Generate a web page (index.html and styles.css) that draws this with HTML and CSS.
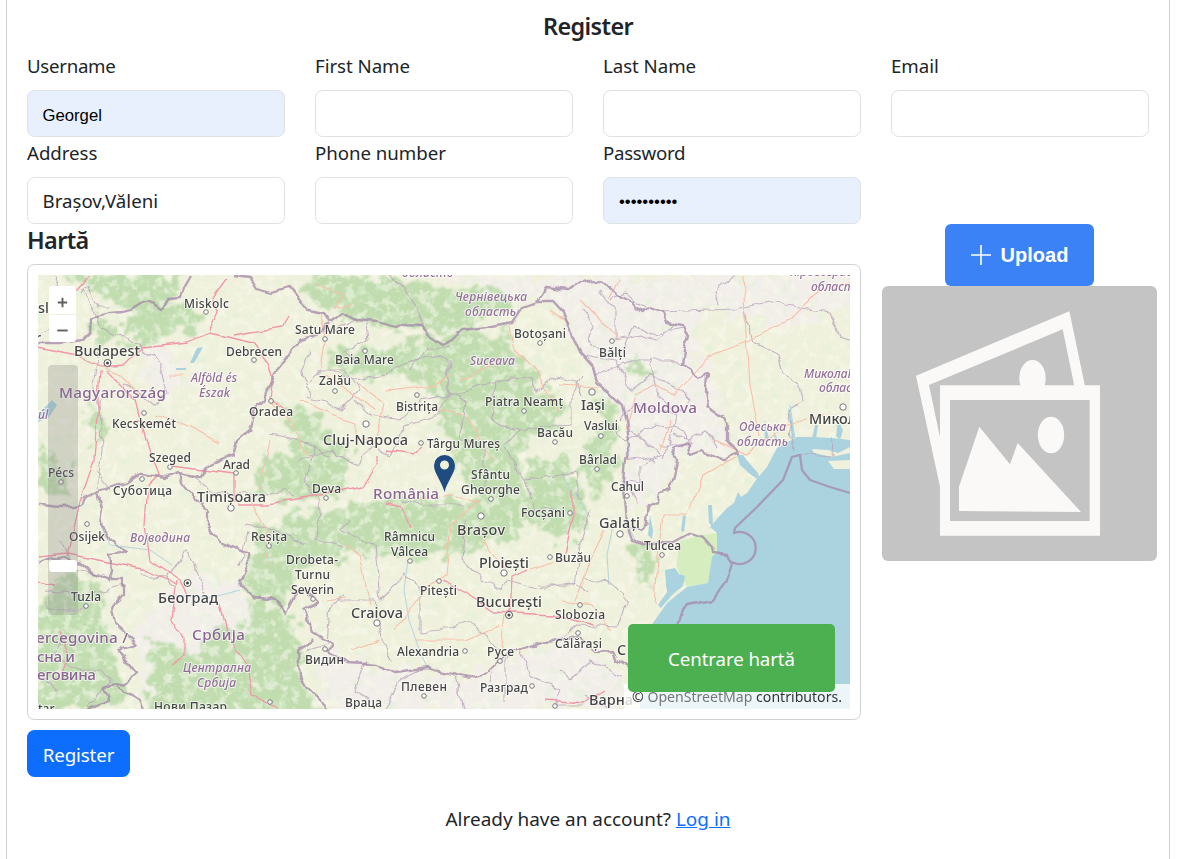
FILE: index.html
```html
<!DOCTYPE html>
<html lang="ro">
<head>
<meta charset="utf-8">
<title>Register</title>
<link rel="stylesheet" href="styles.css">
</head>
<body>
<main class="card">
  <h5 class="title">Register</h5>
  <form class="form">
    <div class="fields">
      <label class="field"><span class="tight">Username</span><input class="input filled" value="Georgel"></label>
      <label class="field"><span>First Name</span><input class="input"></label>
      <label class="field"><span>Last Name</span><input class="input"></label>
      <label class="field"><span>Email</span><input class="input"></label>
      <label class="field"><span>Address</span><input class="input" value="Brașov,Văleni"></label>
      <label class="field"><span>Phone number</span><input class="input"></label>
      <label class="field"><span class="tight">Password</span><input class="input filled secret" value="••••••••••"></label>
    </div>
    <div class="media">
      <section class="map-col">
        <h5 class="map-title">Hartă</h5>
        <div class="map-box">
          <div class="map">
            <svg class="map-art" viewBox="38 275 812 434">
              <defs>
                <filter id="rough" x="-5%" y="-5%" width="110%" height="110%"><feTurbulence type="fractalNoise" baseFrequency=".07" numOctaves="4" seed="4"/><feDisplacementMap in="SourceGraphic" scale="34" xChannelSelector="R" yChannelSelector="G"/><feGaussianBlur stdDeviation="1.1"/></filter>
                <filter id="jag" x="-5%" y="-5%" width="110%" height="110%"><feTurbulence type="fractalNoise" baseFrequency=".1" numOctaves="1" seed="8"/><feDisplacementMap in="SourceGraphic" scale="9" xChannelSelector="R" yChannelSelector="G"/></filter>
                <filter id="bend" x="-5%" y="-5%" width="110%" height="110%"><feTurbulence type="fractalNoise" baseFrequency=".05" numOctaves="1" seed="12"/><feDisplacementMap in="SourceGraphic" scale="8" xChannelSelector="R" yChannelSelector="G"/><feGaussianBlur stdDeviation=".25"/></filter>
                <filter id="speckle" x="0" y="0" width="100%" height="100%"><feTurbulence type="fractalNoise" baseFrequency=".09" numOctaves="4" seed="21"/><feColorMatrix values="0 0 0 0 .74  0 0 0 0 .87  0 0 0 0 .67  5 0 0 0 -2.8"/><feGaussianBlur stdDeviation=".7"/></filter>
                <filter id="valleys" x="0" y="0" width="100%" height="100%"><feTurbulence type="fractalNoise" baseFrequency=".11" numOctaves="3" seed="33"/><feColorMatrix values="0 0 0 0 .94  0 0 0 0 .95  0 0 0 0 .84  0 6 0 0 -3.1"/><feGaussianBlur stdDeviation=".7"/></filter>
              </defs>
              <rect class="land" x="38" y="275" width="812" height="434"/>
              <g class="urban" filter="url(#rough)">
                <path d="M300 275H860V300L780 330 710 310 690 330 710 375 735 450 675 455 660 500 625 500 628 425 595 380 560 305 520 300 440 275zM145 345l30 10 10 30-20 15-25-30zM130 625l60-50 50 10 15 40 20 84H150z"/>
                <path d="M315 650l60 15 80 12 60-15 60-25 50 40V709H330z"/>
              </g>
              <g class="forest" filter="url(#rough)">
                <path d="M60 275H185L170 300 120 308 95 290zM140 300l40 0 25 20-60 28-30-10zM95 315l20 10-10 25-15-10z"/>
                <path d="M310 275l100 0 50 20 30-10 25 18-35 18 0 10-60 0-70-12-45-22z"/>
                <path d="M455 335l50-5 15 25 25 35 0 45-25 10 0 40 60 30 10 15-30 5-10-15-60 5-20-35-20-40-15-50-15-20-45 0-20-15 40-20z"/>
                <path d="M500 400h60v35h-40zM600 390l15 20 0 60-20 30-15-40 20-30zM530 460h35l25 60-25 25-40-25z"/>
                <path d="M285 400l40 15 5 70-40 20-35-20 5-25 35-10zM305 440l50 10-10 40-45 10z"/>
                <path d="M290 515l50-5 60-12 85 5 25-20 20 30-20 30-30 0-30 10-50 5-40-6-60 15-20 40-25-8-5-50z"/>
                <path d="M255 525l50 5-5 40-20 25-35-10z"/>
                <path d="M60 570l40 10 5 30 5 35 15 30-10 34H38V620zM150 640l50 10 15-25 50 5 45 60 10 29H150z"/>
                <path d="M245 600l50 15 10 45-10 10-45-20z"/>
                <path d="M455 440l30 15-10 20-35-10zM330 345l60 15-20 15-40-5z"/>
                <path d="M625 360l35 12-20 4-20-6zM630 550l25-10 0 40-15 5z"/>
                <path d="M85 400l30 25-20 20zM38 440l30 30 0 20-30 0z"/>
              </g>
              <rect x="38" y="275" width="812" height="434" filter="url(#speckle)" opacity=".5"/>
              <rect x="38" y="275" width="812" height="434" filter="url(#valleys)" opacity=".5"/>
              <path class="delta" d="M680 541L703 535 717 533 717 553 708 583 687 587 676 566z"/>
              <g class="water">
                <path d="M850 440L832 438 813 437 797 437 777 448 767 467 756 480 747 493 741 497 738 492 734 503 727 508 710 527 717 533 717 553 712 557 708 583 687 587 667 603 653 623 642 640 640 709H850z"/>
                <path d="M737 455l6 0 6 8 9 10 2 8-10-7-10-9zM665 570l10-2 4 6 6 2-2 10-10 8-12 14-3-3 9-13-1-7zM708 505l4 0 1 22-4-4zM683 515l3 1-2 16-3-1zM650 515l3 15-1 9-4-4zM764 420l5 18-4 3zM773 430l5 10-3 0zM788 408l2 2 5 28-3 0zM815 425l3 0-2 14-4 0zM838 420l5 10-3 10-4-4zM40 412l12-12 5 5-8 12-11 5zM197 348l6-1-9 16-4 0zM176 368h10v2h-10z"/>
              </g>
              <path class="land" d="M812 449l16 1 10 3 12-6v6l-18 4-18-4zM828 461l22-1 0 9-16 0z"/>
              <g class="river"><path d="M408 560l-4 30 5 30 12 35 8 15M563 315l9 20M575 492l15 25M614 520l-7 35 2 30M100 523l10 22 40 5 22 15M240 590l-30 8-35-3M573 495l-10-20M625 520l10 20M790 405l5 35"/></g>
              <g class="county" filter="url(#jag)">
                <path d="M58 275l-4 25 6 25-20 8M80 292l8-5 10 20 12 0M83 290l20 40 20 6 35 24 10 35-15 10-28-22M100 345l-6 35 4 30M100 400l2 50-5 38M95 470l15 20"/>
                <path d="M310 338l55-20 3 22-25 12 20 12M330 370l25 10 30-5 20-12 28-8 15 5 0 38-15 20-28 8-15 30-18-10-15 20-25-15-35 10M310 385l10-15 25 0 15 20-20 20-15-8-20-5M315 445l-10 40 15 15-3 40 25 8M355 400l15 15 30 5 20-20 30-5 15 5-5 40 25 2 0 45M390 275l20 20 15 35M410 370l15-20 25-5"/>
                <path d="M450 360l-3 35 15 0 15-10 25-5 30-3 5 15 15-15 25 5 5 15M495 380l-3 40 20 10 60-5 0-30 10-20M520 430l-15 15 15 30 5 5 35-5 15-5 5 30M525 480l10 30 20-2"/>
                <path d="M350 520l-10 10 35 15 5 55 25-25 15 12 0 45 20-2 30-8 30 30-10 30M400 500l25 5 40 0M465 520l-3 40 20 20 20 10 5-10 30 8 40-5 10 10M540 585l35 0 5-40 10-35M345 595l-15 10-3 40-20 5M335 600l40 0 5 30 10 30"/>
                <path d="M510 650l-5 10 0 40M365 660l-10 30 15 10M420 670l-20 10-15 29M455 675l8 34M520 650l10 25 30 15-5 15 30 0M560 670l10 10 20-20 30 15M585 695l25 14M557 640l20-15 40 2 10-25-15-20-30-2"/>
                <path d="M583 310l10 15-5 15 20 15 15-5 10-25 20 10 30-8M600 290l15 20 0 30 25-5 15 5 20-15M585 355l30 5 15 30 20-15 30 15 10 10-15 15-40-10-15 15M595 375l40-15 35 0 15 5M610 425l15 15 30-15 30 5 5 15-30 0M620 480l20 3 0-18 25-10M630 430l30 25M650 355l8 40 20 20-15 45M638 505l-10-20M675 435l15 5 15-10 12 18"/>
                <path d="M610 300l15-7 20 15M660 312l75-3 40-8 10 5 45 6 10 25 10 3M718 305l-3-15 15-10 5-5M745 312l8 30 25 12 5 20 15 8 5 20-15 10 5 40M797 454l35 3 1-20M625 460l20-3 10 5"/>
                <path d="M310 350l-8 20 10 30M270 435l40 8 20 15M195 477l15 15 60 3 15-5 10 5M245 525l30 5 30 15M248 530l-8 35M140 576l25 2 12 10M165 577l15-15 5-12 15 25 5 20M60 540l15 30 30 5M45 590l40 5 40-10M60 640l-8 20 30 10 20 0 10 12-25 25M45 600l5 10 35 0M38 670l20 20"/>
              </g>
              <g class="road" filter="url(#bend)">
                <path d="M38 348l40 8 22 10 25-2 17-17 45-5 22-9 45 10 15 20 4 15-3 20 17 12M209 331l8-18-5-15 15-20M90 275l-30 35M233 335l50-8 7-12M100 370l-2 30-4 60-10 30-7 20-10 47M105 370l30 30 10 40 13 35-10 10-3 40 5 35 30 20 8 15M38 557l30-3 50 10 30 6 30 15M38 583l18 3M60 630l10 25-8 20M177 580l-5 40 12 18 0 18-12 8M220 605l8 30 20 30 5 30 25 14M237 504l30 0 60-10 35-8 15-22 0-8M388 450l25 4 10-8M170 465l65 8 0 30M385 505l18 3 8 20M443 580l30 18 20 14 60 3 40 10M563 560l10-40 0-30M510 615l2-38 15-7M545 700l40 3 20-12M135 420l20 5"/>
              </g>
              <g class="minor" filter="url(#bend)">
                <path d="M315 285l30 10-12 12 20-3M320 313l5 20-5 35M300 400l30 15 25 8 0 15 20 5 8-40-25-20M385 390l50-5 15-10M440 410l25 5 15 25 15 20M270 400l20 20 20 40M325 375l50 35M510 325l5 25 20 20 25 40M560 385l40 2M500 360l-40 20M580 300l20 20 20 20M625 430l10-35 20-10 20 10 35-40 40-15 40-20 30-30 50-10M743 275l3 60 3 50 10 50M660 450l10-30M715 440l30 15 40-30 40-10M738 455l-35 20-15 40-25 0-5 40-3 50M327 600l20-3M380 640l-30 10M395 630l30-40 20-15 5-50 30-25M345 545l15 10 10 50M415 640l50 0 35-15M500 655l5-40M562 600l30 5 20 25M575 600l15-40 15-30M530 570l35-10M480 530l10 20 15 20M420 500l30-5 30 8M550 310l20 15M610 300l10-20M270 440l-10 50M250 500l15 30 5 40M170 375l15 0M100 365l20 10 20 20 15 0M155 415l30 10 35 18"/>
              </g>
              <g class="nation">
                <path filter="url(#bend)" d="M38 343L60 343 83 340 91 332 92 317 108 313 123 312 132 310 143 303 150 301 160 308 170 298 180 297 183 287 190 275M233 275L250 277 257 288 273 292 290 287 298 298 307 310 323 313 330 322 336 318 343 312 357 320 377 322 397 327 404 324 420 325 430 337 443 345 453 340 463 330 487 327 513 322 523 307 537 302 553 302 563 313 570 330 580 353 593 368 597 382 610 393 622 405 627 427 630 447 625 460 623 480 625 500 627 523 633 540 643 543 673 542 690 533 703 537 712 547 713 553 727 555 732 562 725 583 713 600 687 605 682 612 678 626"/>
                <path d="M732 562A16 16 0 1 0 734 533L735 528 757 507 783 480 792 457 800 455 802 470 810 480 830 487 850 493"/>
                <path d="M537 302L547 287 567 290 573 285 593 280 607 285 617 295 633 302 642 312 650 307 663 312 667 322 683 325 688 337 684 350 682 363 693 370 697 378 707 375 706 390 708 407 720 415 728 423 728 440 738 453 725 458 713 457 703 450 690 455 687 443 672 448 677 461 675 473 670 489 660 493 658 502 647 510 646 522 643 530 630 527" filter="url(#jag)"/>
                <path filter="url(#jag)" d="M330 322L320 333 300 340 287 357 277 370 274 380 267 390 264 400 257 407 250 430 237 440 233 455 222 459 207 467 200 477 177 473 167 477 140 473 127 483 100 490 83 498 80 505 63 507 38 505"/>
                <path filter="url(#jag)" d="M177 473L187 490 200 503 207 510 207 527 220 542 247 553 248 565 240 580 242 587 253 597 277 600 285 612 293 597 305 588 317 603 303 610 313 633 333 645 327 652 347 662 367 663 397 673 427 668 447 673 470 678 487 673 507 653 533 645 557 640 580 637 597 653 613 652 617 660 630 668"/>
                <path filter="url(#jag)" d="M313 640L298 650 300 677 307 687 320 700 325 709M98 490L102 510 100 523 110 540 128 551 110 555 112 570 110 578 123 578 123 593 112 610 115 623 138 645 118 650 135 673 127 683 103 688 109 700 87 709M118 687L140 700 143 709M38 563L53 557 80 562 93 573 110 580"/>
              </g>
              <g class="dots">
                <circle cx="206" cy="312" r="2.3"/><circle cx="254" cy="360" r="2.3"/><circle cx="271" cy="401" r="2.3"/><circle cx="144" cy="413" r="2.3"/><circle cx="170" cy="467" r="2.3"/><circle cx="236" cy="473" r="2.3"/><circle cx="142" cy="479" r="2.3"/><circle cx="61" cy="482" r="2.3"/><circle cx="325" cy="339" r="2.3"/><circle cx="365" cy="351" r="2.3"/><circle cx="335" cy="391" r="2.3"/><circle cx="417" cy="395" r="2.3"/><circle cx="366" cy="424" r="3.2"/><circle cx="421" cy="443" r="2.3"/><circle cx="540" cy="343" r="2.3"/><circle cx="524" cy="411" r="2.3"/><circle cx="555" cy="442" r="2.3"/><circle cx="612" cy="341" r="2.3"/><circle cx="592" cy="392" r="3.2"/><circle cx="601" cy="436" r="2.3"/><circle cx="597" cy="469" r="2.3"/><circle cx="627" cy="496" r="2.3"/><circle cx="843" cy="407" r="3.2"/><circle cx="87" cy="524" r="2.3"/><circle cx="231" cy="508" r="3.2"/><circle cx="269" cy="546" r="2.3"/><circle cx="86" cy="606" r="2.3"/><circle cx="326" cy="498" r="2.3"/><circle cx="481" cy="516" r="3.2"/><circle cx="491" cy="499" r="2.3"/><circle cx="570" cy="513" r="2.3"/><circle cx="410" cy="561" r="2.3"/><circle cx="439" cy="581" r="2.3"/><circle cx="504" cy="573" r="3.2"/><circle cx="550" cy="557" r="2.3"/><circle cx="313" cy="599" r="2.3"/><circle cx="377" cy="623" r="3.2"/><circle cx="465" cy="651" r="2.3"/><circle cx="500" cy="661" r="2.3"/><circle cx="325" cy="649" r="2.3"/><circle cx="424" cy="696" r="2.3"/><circle cx="532" cy="686" r="2.3"/><circle cx="555" cy="706" r="2.3"/><circle cx="580" cy="605" r="2.3"/><circle cx="578" cy="633" r="2.3"/><circle cx="620" cy="534" r="3.2"/><circle cx="662" cy="555" r="2.3"/><circle cx="270" cy="702" r="2.3"/>
                <circle class="capital" cx="107.500" cy="363" r="3.5"/><circle class="capital" cx="187.500" cy="583" r="3.5"/><circle class="capital" cx="509" cy="615" r="3.5"/>
              </g>
              <g class="core"><circle cx="107.500" cy="363" r="1.500"/><circle cx="187.500" cy="583" r="1.500"/><circle cx="509" cy="615" r="1.500"/></g>
              <g class="town">
                <text x="184" y="308" textLength="45">Miskolc</text><text x="226" y="356" textLength="56">Debrecen</text><text x="249" y="416" textLength="44">Oradea</text><text x="112" y="428" textLength="64">Kecskemét</text><text x="149" y="462" textLength="42">Szeged</text><text x="223" y="469" textLength="27">Arad</text><text x="113" y="495" textLength="59">Суботица</text><text x="48" y="477" textLength="26">Pécs</text><text x="295" y="334" textLength="60">Satu Mare</text><text x="335" y="364" textLength="59">Baia Mare</text><text x="319" y="385" textLength="32">Zalău</text><text x="396" y="411" textLength="42">Bistrița</text><text x="427" y="448" textLength="73">Târgu Mureș</text><text x="514" y="338" textLength="52">Botoșani</text><text x="485" y="406" textLength="78">Piatra Neamț</text><text x="537" y="437" textLength="36">Bacău</text><text x="599" y="357" textLength="27">Bălți</text><text x="584" y="430" textLength="34">Vaslui</text><text x="579" y="464" textLength="38">Bârlad</text><text x="611" y="491" textLength="33">Cahul</text><text x="312" y="493" textLength="29">Deva</text><text x="471" y="479" textLength="39">Sfântu</text><text x="461" y="494" textLength="59">Gheorghe</text><text x="69" y="541" textLength="36">Osijek</text><text x="251" y="541" textLength="36">Reșița</text><text x="71" y="601" textLength="30">Tuzla</text><text x="384" y="541" textLength="51">Râmnicu</text><text x="391" y="556" textLength="37">Vâlcea</text><text x="286" y="564" textLength="52">Drobeta-</text><text x="295" y="579" textLength="35">Turnu</text><text x="291" y="594" textLength="43">Severin</text><text x="420" y="595" textLength="37">Pitești</text><text x="521" y="517" textLength="44">Focșani</text><text x="555" y="562" textLength="36">Buzău</text><text x="555" y="619" textLength="50">Slobozia</text><text x="555" y="648" textLength="47">Călărași</text><text x="397" y="656" textLength="62">Alexandria</text><text x="487" y="656" textLength="27">Русе</text><text x="305" y="664" textLength="39">Видин</text><text x="401" y="691" textLength="46">Плевен</text><text x="480" y="692" textLength="48">Разград</text><text x="345" y="707" textLength="37">Враца</text><text x="154" y="711" textLength="73">Нови Пазар</text><text x="644" y="550" textLength="37">Tulcea</text><text x="38" y="713">tar</text>
              </g>
              <g class="city">
                <text x="74" y="356" textLength="66">Budapest</text><text x="323" y="445" textLength="85">Cluj-Napoca</text><text x="581" y="410" textLength="24">Iași</text><text x="809" y="424">Микол</text><text x="197" y="502" textLength="69">Timișoara</text><text x="158" y="603" textLength="60">Београд</text><text x="457" y="535" textLength="48">Brașov</text><text x="479" y="568" textLength="50">Ploiești</text><text x="476" y="607" textLength="66">București</text><text x="351" y="618" textLength="52">Craiova</text><text x="599" y="528" textLength="41">Galați</text><text x="617" y="655">C</text><text x="589" y="705" textLength="44">Варна</text><text x="38" y="313">slava</text><text x="35" y="343">r</text>
              </g>
              <g class="country">
                <text x="59" y="398" textLength="107">Magyarország</text><text x="373" y="499" textLength="66">România</text><text x="633" y="413" textLength="64">Moldova</text><text x="192" y="640" textLength="53">Србија</text><text x="36" y="643" textLength="92">ercegovina /</text><text x="37" y="662" textLength="38">сна и</text><text x="37" y="680" textLength="59">еговина</text>
              </g>
              <g class="region">
                <text x="191" y="382" textLength="46">Alföld és</text><text x="199" y="397" textLength="31">Észak</text><text x="455" y="301" textLength="72">Чернівецька</text><text x="465" y="316" textLength="51">область</text><text x="402" y="277" textLength="51">область</text><text x="470" y="365" textLength="45">Suceava</text><text x="130" y="542" textLength="60">Војводина</text><text x="183" y="672" textLength="68">Централна</text><text x="197" y="687" textLength="39">Србија</text><text x="739" y="431" textLength="47">Одеська</text><text x="737" y="446" textLength="51">область</text><text x="804" y="378">Миколаї</text><text x="819" y="392">област</text><text x="790" y="276">Кіровоград</text><text x="811" y="291">област</text><text x="38" y="419">úl</text>
              </g>
              <path class="pin" fill-rule="evenodd" d="M444.500 492C442 482 434 473 434 465.500A10.500 10.500 0 0 1 455 465.500C455 473 447 482 444.500 492zM444.500 460.500A4.500 4.500 0 1 0 444.500 469.500A4.500 4.500 0 1 0 444.500 460.500z"/>
            </svg>
            <div class="zoom">
              <button type="button" class="zoom-btn top"><svg viewBox="0 0 11 11"><path d="M5.500 .8v9.400M.8 5.500h9.400"/></svg></button>
              <button type="button" class="zoom-btn bottom"><svg viewBox="0 0 11 11"><path d="M.3 5.500h10.400"/></svg></button>
            </div>
            <div class="slider"><div class="thumb"></div></div>
            <div class="credit">© <a>OpenStreetMap</a> <span>contributors.</span></div>
            <button type="button" class="center-btn">Centrare hartă</button>
          </div>
        </div>
      </section>
      <aside class="upload-col">
        <button type="button" class="upload"><svg viewBox="0 0 20 20"><path d="M10 0v20M0 10h20"/></svg><span>Upload</span></button>
        <svg class="preview" viewBox="0 0 825 825">
          <rect width="825" height="825" fill="#c4c4c4"/>
          <g fill="#faf9f8">
            <path fill-rule="evenodd" d="M102 269L562 76 609 300H577L542 130 141 297 174 454V602z"/>
            <ellipse cx="451.500" cy="276" rx="39.500" ry="54"/>
            <path fill-rule="evenodd" d="M174 298H654V749H174zM204 342V705H623V342z"/>
            <ellipse cx="507" cy="447" rx="39.500" ry="55"/>
            <path d="M231 602L292 422 384 535 407 471 597 678 231 675z"/>
          </g>
        </svg>
      </aside>
    </div>
    <button type="button" class="submit">Register</button>
  </form>
  <p class="login">Already have an account? <a href="#">Log in</a></p>
</main>
</body>
</html>
```
FILE: styles.css
```css
* { box-sizing: border-box; }
html, body { height: 100%; }
body { margin: 0; overflow: hidden; background: #fff; color: #212529; font: 18.7px/30px "Noto Sans", sans-serif; }
button, input { font: inherit; margin: 0; }
.card { height: 859px; margin: 0 8px 0 6px; padding: 10px 12px 0 20px; border: solid #cfd0d1; border-width: 0 1px; }
.title, .map-title { margin: 0; height: 40px; font-size: 23.4px; font-weight: 600; line-height: 32px; letter-spacing: -.6px; }
.title { padding-right: 8px; text-align: center; }
.fields { display: grid; grid-template-columns: repeat(4, 258px); column-gap: 30px; }
.field { display: flex; flex-direction: column; }
.field span { height: 40px; line-height: 32px; letter-spacing: -.05px; }
.field .tight { letter-spacing: -.3px; }
.input { width: 100%; height: 47px; padding: 7px 15px 7px 14.5px; border: 1px solid #dee2e6; border-radius: 7.5px; background: #fff; color: #212529; outline: 0; }
.input.filled { background: #e8f0fe; color: #000; font: 16.7px "Liberation Sans", sans-serif; padding-top: 11px; }
.input.secret { padding-top: 9px; padding-left: 15px; }
.media { display: flex; gap: 21px; }
.map-col { width: 834px; }
.map-box { height: 456px; padding: 10px; border: 1px solid #cfd0d1; border-radius: 7.5px; }
.map { position: relative; width: 812px; height: 434px; overflow: hidden; }
.map-art { display: block; width: 812px; height: 434px; }
.land { fill: #f0f1dc; }
.urban { fill: #f2eee9; }
.forest { fill: #c1ddb0; }
.water { fill: #aad3df; }
.delta { fill: #d6edc0; }
.river, .county, .road, .minor, .nation { fill: none; stroke-linejoin: round; }
.river { stroke: #b4d5e0; stroke-width: 1; }
.county { stroke: #b9a5bd; stroke-width: 1.1; opacity: .8; }
.road { stroke: #f296a9; stroke-width: 1.3; }
.minor { stroke: #f9bfa9; stroke-width: 1.1; }
.nation { stroke: #a58aaa; stroke-width: 2.3; opacity: .78; }
.dots { fill: #fff; stroke: #777; stroke-width: 1; }
.capital { stroke: #555; }
.core { fill: #444; }
.town, .city, .country, .region { font-family: "Noto Sans", sans-serif; font-weight: 500; paint-order: stroke; stroke: rgba(255,255,255,.65); stroke-width: 2px; stroke-linejoin: round; fill: #454545; }
.town { font-size: 12px; }
.city { font-size: 14.4px; }
.country { font-size: 15.2px; fill: #8a6590; }
.region { font-size: 12px; font-style: italic; fill: #947099; }
.pin { fill: #1f4b80; }
.zoom { position: absolute; left: 11px; top: 11px; display: grid; gap: 1px; }
.zoom-btn { display: grid; place-items: center; width: 27px; height: 27.500px; padding: 5px 0 0; border: 0; background: #fff; }
.zoom-btn svg { width: 11px; height: 11px; stroke: #606060; stroke-width: 1.9; fill: none; }
.top { border-radius: 3px 3px 0 0; }
.bottom { border-radius: 0 0 3px 3px; }
.slider { position: absolute; left: 10px; top: 90px; width: 30px; height: 250px; padding: 195px 1px 0; border-radius: 4px; background: rgba(128,128,128,.28); }
.thumb { height: 12px; border-radius: 3px; background: #fff; }
.credit { position: absolute; right: 0; bottom: 0; width: 226px; height: 25px; padding-left: 8px; background: rgba(255,255,255,.78); font-size: 14.1px; line-height: 25px; white-space: nowrap; color: #333; }
.credit a { color: #777; }
.center-btn { position: absolute; right: 15px; bottom: 17px; width: 207px; height: 68px; padding: 2px 0 0; border: 0; border-radius: 5px; background: #4caf50; color: #fff; letter-spacing: -.1px; }
.upload-col { display: flex; flex-direction: column; align-items: center; width: 275px; }
.upload { display: flex; align-items: center; justify-content: center; gap: 10px; width: 149px; height: 62px; padding: 0; border: 0; border-radius: 6px; background: #3b82f6; color: #fff; font: bold 20px "Liberation Sans", sans-serif; }
.upload svg { width: 20px; height: 20px; fill: none; stroke: #fff; stroke-width: 1.6; }
.preview { width: 275px; height: 275px; border-radius: 6px; }
.submit { display: block; width: 103px; height: 47px; margin-top: 10px; padding: 2px 0 0; border: 0; border-radius: 7.5px; background: #0d6efd; color: #fff; letter-spacing: -.1px; }
.login { margin: 27px 8px 0 0; text-align: center; font-size: 18.95px; }
.login a { color: #0d6efd; }
```
